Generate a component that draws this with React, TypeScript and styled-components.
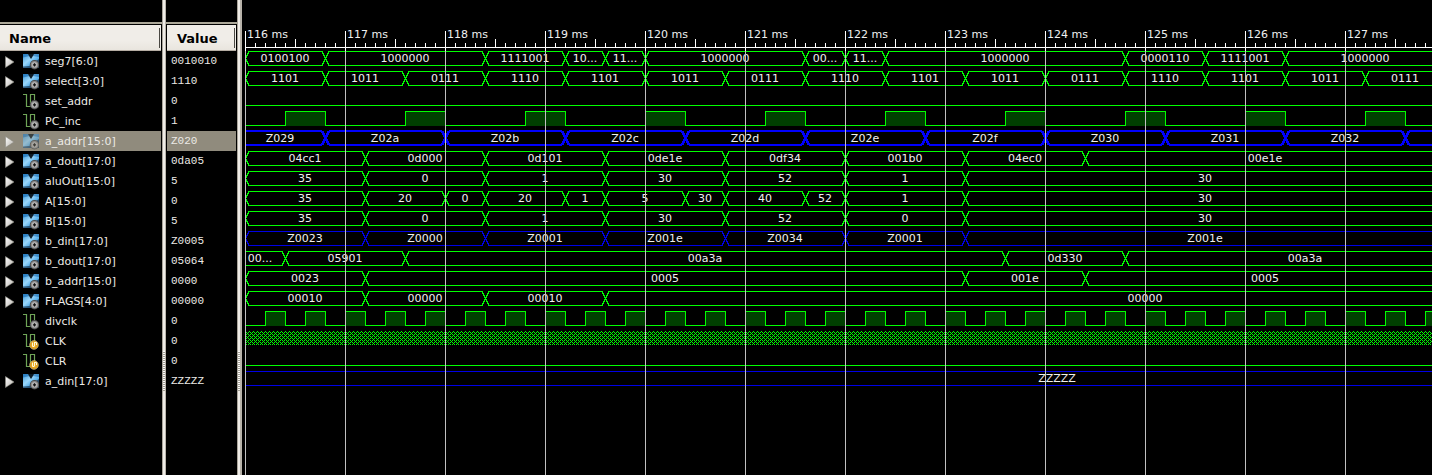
import React from "react";
import styled, { createGlobalStyle } from "styled-components";

const GREEN = "#00ff00";
const BLUE = "#0000e6";
const MS = 100; // pixels per millisecond
const ROW = 20;

const GlobalStyle = createGlobalStyle`
  * { box-sizing: border-box; }
  body {
    margin: 0;
    background: #000;
    color: #eceae6;
    font-family: "DejaVu Sans", sans-serif;
    font-size: 11px;
  }
`;

type Segment = [start: number, label: string];
type Trace =
  | { kind: "bus"; segments: Segment[]; end: number; color?: string }
  | { kind: "clock"; high: number; width: number; period: number }
  | { kind: "low" }
  | { kind: "dense" }
  | { kind: "floating"; label: string; center: number };

interface Signal {
  name: string;
  value: string;
  icon: "bus" | "wire" | "input";
  selected?: boolean;
  trace: Trace;
}

const bus = (segments: Segment[], end = 1200, color = GREEN): Trace => ({
  kind: "bus",
  segments,
  end,
  color,
});

const SELECT_CODES = ["1101", "1011", "0111", "1110"];

const SIGNALS: Signal[] = [
  {
    name: "seg7[6:0]",
    value: "0010010",
    icon: "bus",
    trace: bus([
      [0, "0100100"], [80, "1000000"], [240, "1111001"], [320, "10..."],
      [360, "11..."], [400, "1000000"], [560, "00..."], [600, "11..."],
      [640, "1000000"], [880, "0000110"], [960, "1111001"], [1040, "1000000"],
    ]),
  },
  {
    name: "select[3:0]",
    value: "1110",
    icon: "bus",
    trace: bus(
      Array.from({ length: 15 }, (_, i): Segment => [i * 80, SELECT_CODES[i % 4]]),
    ),
  },
  { name: "set_addr", value: "0", icon: "wire", trace: { kind: "low" } },
  {
    name: "PC_inc",
    value: "1",
    icon: "wire",
    trace: { kind: "clock", high: 40, width: 40, period: 120 },
  },
  {
    name: "a_addr[15:0]",
    value: "Z020",
    icon: "bus",
    selected: true,
    trace: bus(
      [
        [-10, "Z029"], [80, "Z02a"], [200, "Z02b"], [320, "Z02c"], [440, "Z02d"],
        [560, "Z02e"], [680, "Z02f"], [800, "Z030"], [920, "Z031"], [1040, "Z032"],
        [1160, ""],
      ],
      1280,
      "#0000ff",
    ),
  },
  {
    name: "a_dout[17:0]",
    value: "0da05",
    icon: "bus",
    trace: bus([
      [0, "04cc1"], [120, "0d000"], [240, "0d101"], [360, "0de1e"],
      [480, "0df34"], [600, "001b0"], [720, "04ec0"], [840, "00e1e"],
    ]),
  },
  {
    name: "aluOut[15:0]",
    value: "5",
    icon: "bus",
    trace: bus([
      [0, "35"], [120, "0"], [240, "1"], [360, "30"], [480, "52"], [600, "1"], [720, "30"],
    ]),
  },
  {
    name: "A[15:0]",
    value: "0",
    icon: "bus",
    trace: bus([
      [0, "35"], [120, "20"], [200, "0"], [240, "20"], [320, "1"], [360, "5"],
      [440, "30"], [480, "40"], [560, "52"], [600, "1"], [720, "30"],
    ]),
  },
  {
    name: "B[15:0]",
    value: "5",
    icon: "bus",
    trace: bus([
      [0, "35"], [120, "0"], [240, "1"], [360, "30"], [480, "52"], [600, "0"], [720, "30"],
    ]),
  },
  {
    name: "b_din[17:0]",
    value: "Z0005",
    icon: "bus",
    trace: bus(
      [
        [0, "Z0023"], [120, "Z0000"], [240, "Z0001"], [360, "Z001e"],
        [480, "Z0034"], [600, "Z0001"], [720, "Z001e"],
      ],
      1200,
      BLUE,
    ),
  },
  {
    name: "b_dout[17:0]",
    value: "05064",
    icon: "bus",
    trace: bus(
      [[-10, "00..."], [40, "05901"], [160, "00a3a"], [760, "0d330"], [880, "00a3a"]],
      1240,
    ),
  },
  {
    name: "b_addr[15:0]",
    value: "0000",
    icon: "bus",
    trace: bus([[0, "0023"], [120, "0005"], [720, "001e"], [840, "0005"]]),
  },
  {
    name: "FLAGS[4:0]",
    value: "00000",
    icon: "bus",
    trace: bus([[0, "00010"], [120, "00000"], [240, "00010"], [360, "00000"]], 1440),
  },
  {
    name: "divclk",
    value: "0",
    icon: "wire",
    trace: { kind: "clock", high: 20, width: 20, period: 40 },
  },
  { name: "CLK", value: "0", icon: "input", trace: { kind: "dense" } },
  { name: "CLR", value: "0", icon: "input", trace: { kind: "low" } },
  {
    name: "a_din[17:0]",
    value: "ZZZZZ",
    icon: "bus",
    trace: { kind: "floating", label: "ZZZZZ", center: 812 },
  },
];

/* ---------- layout ---------- */

const Viewer = styled.main`
  display: flex;
  min-height: 100vh;
  overflow: hidden;
`;

const Pane = styled.section<{ $width: number; $inset?: boolean }>`
  flex: none;
  width: ${(p) => p.$width}px;
  padding: 22px 1px 0 ${(p) => (p.$inset ? 1 : 0)}px;
  background: linear-gradient(#aca899, #aca899) 0 22px / 100% 2px no-repeat;
`;

const Table = styled.table`
  width: 100%;
  margin-top: 3px;
  border-spacing: 0;
  table-layout: fixed;
`;

const HeadCell = styled.th<{ $indent: number }>`
  position: relative;
  height: 26px;
  padding: 0 0 0 ${(p) => p.$indent}px;
  background: linear-gradient(#f0ede8 60%, #e8e4dd);
  box-shadow: inset 0 -1px #b5ada3;
  color: #000;
  font-size: 13px;
  font-weight: bold;
  line-height: 25px;
  text-align: left;

  &::after {
    content: "";
    position: absolute;
    top: 3px;
    right: 1px;
    width: 1px;
    height: 20px;
    background: #4a4843;
  }
`;

const Row = styled.tr<{ $selected?: boolean }>`
  height: ${ROW}px;
  background: ${(p) => (p.$selected ? "#908b7d" : "transparent")};
`;

const NameCell = styled.td`
  padding: 0;
`;

const NameLine = styled.div`
  display: flex;
  align-items: center;
  height: ${ROW}px;
  padding: 2px 0 0 5px;
  line-height: 18px;
  white-space: nowrap;
`;

const Expander = styled.button`
  flex: none;
  width: 10px;
  height: 12px;
  margin: 0 8px 0 0;
  padding: 0;
  border: 0;
  background: none;

  svg { display: block; }
`;

const ExpanderGap = styled.span`
  flex: none;
  width: 18px;
`;

const SignalIcon = styled.svg<{ $dim?: boolean }>`
  flex: none;
  width: 16px;
  height: 16px;
  margin-right: 6px;
  opacity: ${(p) => (p.$dim ? 0.65 : 1)};
`;

const ValueCell = styled.td`
  height: ${ROW}px;
  padding: 0 0 0 4px;
  font-family: "Liberation Mono", monospace;
  font-size: 11px;
  line-height: ${ROW}px;
  white-space: nowrap;
`;

const Splitter = styled.div<{ $width: number }>`
  flex: none;
  width: ${(p) => p.$width}px;
  padding-top: 351px;
  border-left: 1px solid #aaa59b;
  border-right: ${(p) => p.$width - 3}px solid #b8b3aa;
  background: #efece7;
`;

const Grip = styled.div`
  height: 40px;
  background: repeating-linear-gradient(#fff 0 1px, #a5a197 1px 2px);
`;

const WavePane = styled.section`
  position: relative;
  flex: 1;
  min-width: 0;
  margin-left: 3px;
  overflow: hidden;
`;

const Ruler = styled.svg`
  display: block;
  width: 100%;
  height: 51px;
`;

const TraceRow = styled.svg`
  display: block;
  width: 100%;
  height: ${ROW}px;
  overflow: visible;
  shape-rendering: crispEdges;
`;

const Grid = styled.svg`
  position: absolute;
  inset: 51px 0 0 0;
  width: 100%;
  height: calc(100% - 51px);
  pointer-events: none;
`;

const WaveText = styled.text`
  fill: #f0f0f0;
  font-family: "DejaVu Sans", sans-serif;
  font-size: 11px;
`;

/* ---------- icons ---------- */

function Gear() {
  return (
    <g>
      <circle cx="11.5" cy="10.8" r="4.7" fill="#4a4a4a" />
      <circle cx="11.5" cy="10.8" r="3.8" fill="#8e8e8e" />
      <circle cx="11.5" cy="10.8" r="2.6" fill="#bdbdbd" />
      <path d="M11.5 9.2v3.2M9.9 10.8h3.2" stroke="#111" strokeWidth="1.3" />
    </g>
  );
}

function InputBadge() {
  return (
    <g>
      <circle cx="11" cy="11" r="4.4" fill="url(#badge)" stroke="#c9b58a" strokeWidth=".6" />
      <path d="M9.5 8.5v4M9.5 12.5h1.5M11.5 8.5v4M11 8.5h2.5M13.5 8.5v2.5" fill="none" stroke="#fff8dc" strokeWidth="1" />
    </g>
  );
}

function Icon({ type, dim }: { type: Signal["icon"]; dim?: boolean }) {
  return (
    <SignalIcon viewBox="0 0 16 16" $dim={dim} aria-hidden="true">
      {type === "bus" ? (
        <>
          <path d="M0 0h16v14H0z" fill="url(#busBlue)" />
          <path d="M0 0h5.5l1 2L0 3.5zM10.5 0H16v3L9.5 2z" fill="#1667ad" opacity=".6" />
          <path d="M5 0l2 3.5L8 5l1-1.5L11 0z" fill="#0c1a24" />
          <path d="M0 14v-1.5L6 12 16 5v9z" fill="#061d36" opacity=".6" />
        </>
      ) : (
        <path d="M0 .5h3.5v12h4V.5h4v9" fill="none" stroke="#6fa557" strokeWidth="1.2" />
      )}
      {type === "input" ? <InputBadge /> : <Gear />}
    </SignalIcon>
  );
}

const Paints = styled.svg`
  position: absolute;
  width: 0;
  height: 0;
`;

function IconPaints() {
  return (
    <Paints aria-hidden="true">
      <defs>
        <linearGradient id="busBlue" x1="0" y1="0" x2="1" y2="1">
          <stop offset="0" stopColor="#3d9bdc" />
          <stop offset=".4" stopColor="#9ad6fa" />
          <stop offset=".6" stopColor="#5db2ea" />
          <stop offset="1" stopColor="#1a5a94" />
        </linearGradient>
        <radialGradient id="badge">
          <stop offset="0" stopColor="#f8b92c" />
          <stop offset="1" stopColor="#d99a1c" />
        </radialGradient>
        <linearGradient id="arrow" x1="0" y1="0" x2="1" y2="1">
          <stop offset="0" stopColor="#ffffff" />
          <stop offset="1" stopColor="#b5b2ab" />
        </linearGradient>
        <pattern id="dense" width="4" height="4" patternUnits="userSpaceOnUse">
          <path
            d="M0 0h1v1h-1zM1 1h1v1h-1zM3 1h1v1h-1zM2 2h1v1h-1zM1 3h1v1h-1zM3 3h1v1h-1z"
            fill={GREEN}
          />
        </pattern>
      </defs>
    </Paints>
  );
}

/* ---------- waveforms ---------- */

function BusTrace({ trace, bold }: { trace: Extract<Trace, { kind: "bus" }>; bold?: boolean }) {
  const { segments, end, color } = trace;
  const top = bold ? 0 : 0.5;
  const bottom = bold ? 14 : 14.5;
  const stopOf = (i: number) => (i + 1 < segments.length ? segments[i + 1][0] : end);
  const rails = segments
    .map(([start], i) => {
      const span = `H${stopOf(i) - 3}`;
      return `M${start + 4} ${top}${span}M${start + 4} ${bottom}${span}`;
    })
    .join("");
  const crossings = segments
    .filter(([start]) => start >= 0)
    .map(([x]) => `M${x - 3} ${top}L${x + 4} ${bottom}M${x + 4} ${top}L${x - 3} ${bottom}`)
    .join("");
  return (
    <>
      <path d={rails} fill="none" stroke={color} strokeWidth={bold ? 2 : 1} />
      <path d={crossings} fill="none" stroke={color} strokeWidth={bold ? 3 : 1} />
      {segments.map(([start, label], i) => (
        <WaveText key={start} x={(start + stopOf(i)) / 2} y={11} textAnchor="middle">
          {label}
        </WaveText>
      ))}
    </>
  );
}

function ClockTrace({ trace }: { trace: Extract<Trace, { kind: "clock" }> }) {
  const pulses = Array.from({ length: 60 }, (_, i) => trace.high + i * trace.period);
  const edge = pulses
    .map((x) => `H${x + 0.5}V.5H${x + trace.width + 0.5}V14.5`)
    .join("");
  return (
    <>
      {pulses.map((x) => (
        <rect key={x} x={x} y={0} width={trace.width} height={15} fill="#004000" />
      ))}
      <path d={`M0 14.5${edge}`} fill="none" stroke={GREEN} />
    </>
  );
}

function SignalTrace({ signal }: { signal: Signal }) {
  const { trace, selected } = signal;
  return (
    <TraceRow role="img" aria-label={`${signal.name} waveform`}>
      {trace.kind === "bus" && <BusTrace trace={trace} bold={selected} />}
      {trace.kind === "clock" && <ClockTrace trace={trace} />}
      {trace.kind === "low" && <rect y="14" width="100%" height="1" fill={GREEN} />}
      {trace.kind === "dense" && <rect width="100%" height="14" fill="url(#dense)" />}
      {trace.kind === "floating" && (
        <>
          <rect width="100%" height="1" fill={BLUE} />
          <rect y="14" width="100%" height="1" fill={BLUE} />
          <WaveText x={trace.center} y={11} textAnchor="middle">
            {trace.label}
          </WaveText>
        </>
      )}
    </TraceRow>
  );
}

function TimeRuler() {
  return (
    <Ruler role="img" aria-label="Time scale">
      <defs>
        <pattern id="ticks" width={MS} height="51" patternUnits="userSpaceOnUse">
          <rect x="0" y="31" width="1" height="20" fill="#fff" />
          {[10, 20, 30, 40, 60, 70, 80, 90].map((x) => (
            <rect key={x} x={x} y="43" width="1" height="4" fill="#fff" />
          ))}
          <rect x="50" y="39" width="1" height="8" fill="#fff" />
        </pattern>
      </defs>
      <rect width="100%" height="51" fill="url(#ticks)" />
      <rect y="47" width="100%" height="1" fill="#fff" />
      {Array.from({ length: 12 }, (_, i) => (
        <WaveText key={i} x={i * MS + 2} y={38}>
          {`${116 + i} ms`}
        </WaveText>
      ))}
    </Ruler>
  );
}

function GridLines() {
  return (
    <Grid aria-hidden="true">
      <defs>
        <pattern id="grid" width={MS} height="20" patternUnits="userSpaceOnUse">
          <rect width="1" height="20" fill="#c0c0c0" />
        </pattern>
      </defs>
      <rect width="100%" height="100%" fill="url(#grid)" />
    </Grid>
  );
}

export default function App() {
  return (
    <>
      <GlobalStyle />
      <IconPaints />
      <Viewer>
        <Pane $width={162}>
          <Table>
            <thead>
              <tr>
                <HeadCell $indent={9} scope="col">Name</HeadCell>
              </tr>
            </thead>
            <tbody>
              {SIGNALS.map((s) => (
                <Row key={s.name} $selected={s.selected}>
                  <NameCell>
                    <NameLine>
                      {s.icon === "bus" ? (
                        <Expander type="button" aria-label={`Expand ${s.name}`}>
                          <svg width="10" height="12" viewBox="0 0 10 12">
                            <path d="M.5 .5L9 6 .5 11.5z" fill="url(#arrow)" stroke="#8c8981" strokeWidth=".6" />
                          </svg>
                        </Expander>
                      ) : (
                        <ExpanderGap />
                      )}
                      <Icon type={s.icon} dim={s.selected} />
                      {s.name}
                    </NameLine>
                  </NameCell>
                </Row>
              ))}
            </tbody>
          </Table>
        </Pane>
        <Splitter $width={4}>
          <Grip />
        </Splitter>
        <Pane $width={71} $inset>
          <Table>
            <thead>
              <tr>
                <HeadCell $indent={10} scope="col">Value</HeadCell>
              </tr>
            </thead>
            <tbody>
              {SIGNALS.map((s) => (
                <Row key={s.name} $selected={s.selected}>
                  <ValueCell>{s.value}</ValueCell>
                </Row>
              ))}
            </tbody>
          </Table>
        </Pane>
        <Splitter $width={5}>
          <Grip />
        </Splitter>
        <WavePane>
          <TimeRuler />
          {SIGNALS.map((s) => (
            <SignalTrace key={s.name} signal={s} />
          ))}
          <GridLines />
        </WavePane>
      </Viewer>
    </>
  );
}
